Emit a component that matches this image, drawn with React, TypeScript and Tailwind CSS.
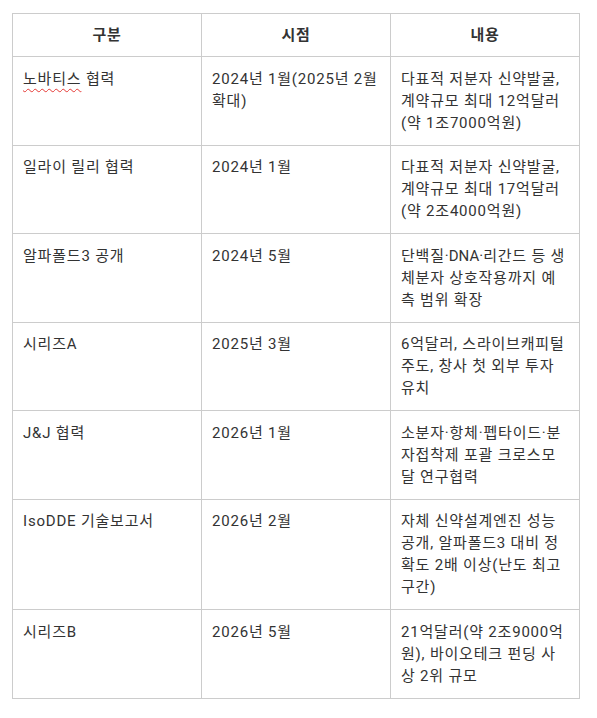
import type { ReactNode } from "react";

type Row = {
  label: ReactNode;
  when: string;
  detail: ReactNode;
};

const ROWS: Row[] = [
  {
    label: (
      <>
        <span className="underline decoration-wavy decoration-[#e53935] decoration-1 underline-offset-[4px]">
          노바티스
        </span>{" "}
        협력
      </>
    ),
    when: "2024년 1월(2025년 2월 확대)",
    detail: "다표적 저분자 신약발굴, 계약규모 최대 12억달러(약 1조7000억원)",
  },
  {
    label: "일라이 릴리 협력",
    when: "2024년 1월",
    detail: "다표적 저분자 신약발굴, 계약규모 최대 17억달러(약 2조4000억원)",
  },
  {
    label: "알파폴드3 공개",
    when: "2024년 5월",
    detail: (
      <>
        단백질<span className="tracking-[0px]">·DNA·</span>리간드 등 생체분자 상호작용까지 예측 범위 확장
      </>
    ),
  },
  {
    label: "시리즈A",
    when: "2025년 3월",
    detail: "6억달러, 스라이브캐피털 주도, 창사 첫 외부 투자 유치",
  },
  {
    label: "J&J 협력",
    when: "2026년 1월",
    detail: "소분자·항체·펩타이드·분자접착제 포괄 크로스모달 연구협력",
  },
  {
    label: "IsoDDE 기술보고서",
    when: "2026년 2월",
    detail: "자체 신약설계엔진 성능 공개, 알파폴드3 대비 정확도 2배 이상(난도 최고 구간)",
  },
  {
    label: "시리즈B",
    when: "2026년 5월",
    detail: "21억달러(약 2조9000억원), 바이오테크 펀딩 사상 2위 규모",
  },
];

const cell = "border border-[#cccccc] px-[10px] py-[10.75px] align-top text-left";
const head = "border border-[#cccccc] px-[10px] py-[10px] text-center font-semibold";

export default function App() {
  return (
    <div className="min-h-screen bg-white pl-[12px] pt-[13px] font-['Roboto','Noto_Sans_CJK_KR',sans-serif] text-[15px] leading-[22px] tracking-[0.8px] text-[#333333]">
      <table className="w-[568px] table-fixed border-collapse">
        <thead>
          <tr>
            <th className={head}>구분</th>
            <th className={head}>시점</th>
            <th className={head}>내용</th>
          </tr>
        </thead>
        <tbody>
          {ROWS.map((row) => (
            <tr key={row.when}>
              <td className={cell}>{row.label}</td>
              <td className={cell}>{row.when}</td>
              <td className={cell}>{row.detail}</td>
            </tr>
          ))}
        </tbody>
      </table>
    </div>
  );
}
